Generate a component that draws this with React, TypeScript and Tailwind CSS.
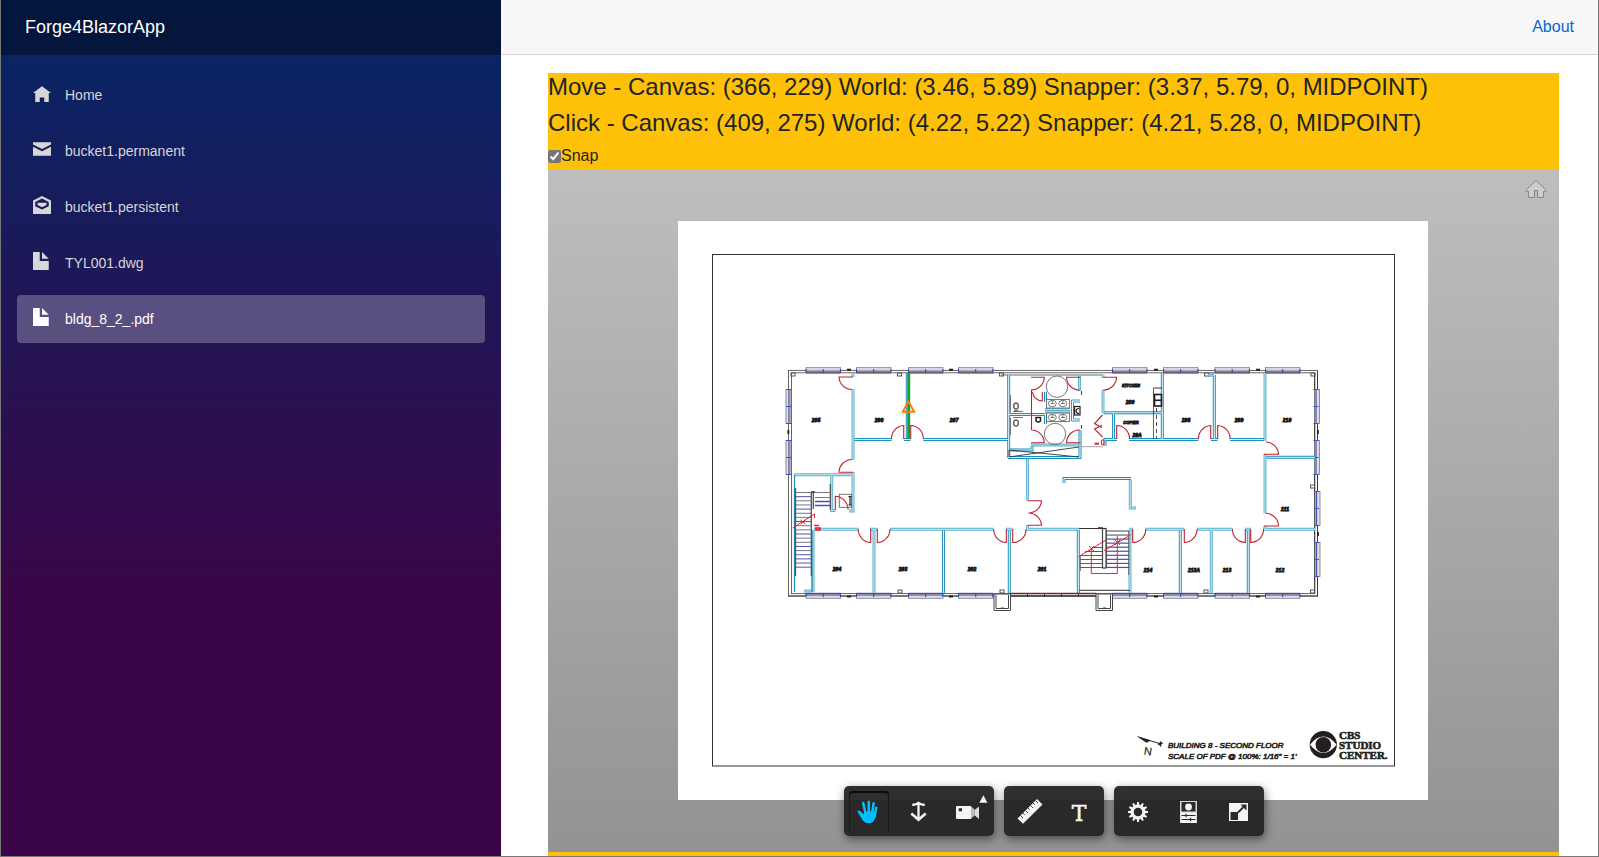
import type { ReactNode } from "react";

const OI_HOME = "M4 1l-4 3h1v4h2v-2h2v2h2v-4.03l1 .03-4-3z";
const OI_ENVELOPE_CLOSED = "M0 1v1l4 2 4-2v-1h-8zm0 2v4h8v-4l-4 2-4-2z";
const OI_ENVELOPE_OPEN =
  "M4 0l-4 2v6h8v-6l-4-2zm0 1.13l3 1.5v1.88l-3 1.5-3-1.5v-1.88l3-1.5zm-2 1.87v1l2 1 2-1v-1h-4z";
const OI_FILE = "M0 0v8h7v-4h-4v-4h-3zm4 0v3h3l-3-3z";

const navItems = [
  { label: "Home", icon: OI_HOME },
  { label: "bucket1.permanent", icon: OI_ENVELOPE_CLOSED },
  { label: "bucket1.persistent", icon: OI_ENVELOPE_OPEN },
  { label: "TYL001.dwg", icon: OI_FILE },
  { label: "bldg_8_2_.pdf", icon: OI_FILE, active: true },
];

function Sidebar() {
  return (
    <aside className="flex w-[500px] shrink-0 flex-col bg-[linear-gradient(180deg,#052767_0%,#3a0647_70%)]">
      <div className="flex h-[55px] shrink-0 items-center bg-black/40 px-6 pb-0.5">
        <a href="#" className="text-lg text-white">
          Forge4BlazorApp
        </a>
      </div>
      <nav className="flex flex-col gap-2 px-4 pt-4">
        {navItems.map((item) => (
          <a
            key={item.label}
            href="#"
            className={
              item.active
                ? "flex h-12 items-center rounded bg-white/25 px-4 text-sm text-white"
                : "flex h-12 items-center rounded px-4 text-sm text-[#d7d7d7]"
            }
          >
            <span className="block w-8 pb-1">
              <svg viewBox="0 0 8 8" className="size-[18px] fill-current" aria-hidden="true">
                <path fillRule="evenodd" d={item.icon} />
              </svg>
            </span>
            {item.label}
          </a>
        ))}
      </nav>
    </aside>
  );
}

const solidWalls = `
M853 439.5H891.5M904 439.5H910.5M923.3 439.5H1008M1008.7 375V458M1009 414.5H1045M1045.5 392V402M1045.5 414V424
M1032 446V450H1009M1008 457.5H1080V430M1103.5 412.7H1162M1113.5 413V439M1129 439.5H1198.5M1211 439.5H1217.5
M1105 446V439.5H1117M1162.3 373V439M1214.3 375V439M1230 439.5H1265M1265 457.3H1315M1208 375H1214
M943.5 530V593M1009.3 530V593M1078.3 530V593M1064 483V478.5H1131M1248.3 530V593M1180.3 530V593`;

const softWalls = `
M853 373V377M853 389V460M853 472V511H849M794 474.7H853M831.7 475V510.5H835.5M814 529.3H858.3M870 529.3H877.5
M890 529.3H993.7M1006 529.3H1012.5M1026 529.3H1079M813 530V592M804 591H813M874 530V593M1027.5 459V500.5M1027.5 525V529
M1130 530V593M1129 529.3H1133M1145.5 529.3H1184M1197 529.3H1232.5M1245.5 529.3H1251M1263 529.3H1315M1211.3 530V593
M1130.3 480V508H1136M1265 454V513.5M1265 526V529M1265 373V441M1103 390V413M1103 375V378M1079.5 376V391
M1031 445H1080M1045 409.5H1070M1045 411.8H1070`;

const doors = `
M853 377H839A13 13 0 0 0 852 389.5M903.7 439V425.5A13 13 0 0 0 891.5 439M910.7 439V425.5A13 13 0 0 1 923.3 439
M853 472.3H839A13 13 0 0 1 852 459.5M870.7 529V542.5A13 13 0 0 1 858.3 529M877.3 529V542.5A13 13 0 0 0 890 529
M1006.3 529V542.5A13 13 0 0 1 993.7 529M1012.7 529V542.5A13 13 0 0 0 1026 529
M1027.5 500.7H1041.5A13 13 0 0 1 1028.5 513M1027.5 525.3H1041.5A13 13 0 0 0 1028.5 513
M835.3 509.5V496.3A13 13 0 0 1 848 509.5M1132.7 529V542.5A13 13 0 0 0 1145.7 529
M1184.3 529V542.5A13 13 0 0 0 1197 529M1245.3 529V542.5A13 13 0 0 1 1232.5 529M1250.7 529V542.5A13 13 0 0 0 1263.5 529
M1264 526H1278.5A13 13 0 0 0 1266 513.3M1103 377.3H1116.5A13 13 0 0 1 1103 390M1116.7 439V425.5A13 13 0 0 1 1129.5 439
M1210.7 439V425.5A13 13 0 0 0 1198.5 439M1217.7 439V425.5A13 13 0 0 1 1230 439M1264 454.3H1278.5A13 13 0 0 0 1266 442
M1031 377.3H1044.3A13 13 0 0 1 1031.5 390V430M1042.3 392V401A10 10 0 0 1 1032.5 392M1031 442.7H1044.3A13 13 0 0 0 1031.5 430
M1080.5 377.3H1066.5A13 13 0 0 0 1080 390M1080.5 442.7H1066.5A13 13 0 0 1 1080 430
M1081.5 391V395M1081.5 425V429M1102.5 415L1094.5 423.5L1102 427.5M1102 425.5L1094.5 429L1102.5 437`;

const windowXs = [806, 856.5, 908.5, 958.5, 1112.5, 1163.5, 1215, 1265.5];
const sideWindows = [
  { x: 786, y: 389.5 },
  { x: 786, y: 440.5 },
  { x: 1314.5, y: 389.5 },
  { x: 1314.5, y: 440.5 },
  { x: 1315, y: 491.5 },
  { x: 1315, y: 542.5 },
];
const vents = [848.5, 950.5, 1155.5, 1257.5];
const columns = [
  [793, 374.5],
  [899.5, 374.5],
  [1001.5, 374.5],
  [1206.5, 374.5],
  [1313, 374.5],
  [900, 591.5],
  [1002, 591.5],
  [1206, 591.5],
  [1312.5, 591.5],
  [1312.5, 486.5],
];
const rooms: [string, number, number][] = [
  ["205", 816, 422],
  ["206", 879, 422],
  ["207", 954, 422],
  ["208", 1186, 422],
  ["209", 1239, 422],
  ["210", 1287, 422],
  ["211", 1285, 511],
  ["204", 837, 571],
  ["203", 903, 571],
  ["202", 972, 571],
  ["201", 1042, 571],
  ["214", 1148, 572],
  ["213A", 1194, 572],
  ["213", 1227, 572],
  ["212", 1280, 572],
  ["KITCHEN", 1131, 387],
  ["200", 1130, 404],
  ["COPIER", 1131, 424],
  ["20A", 1137, 437],
];
const leftTreads = Array.from({ length: 19 }, (_, i) => 492.5 + i * 4.15);
const centerTreads = Array.from({ length: 10 }, (_, i) => 531 + i * 4.05);

function FloorPlan() {
  return (
    <svg
      viewBox="548 221 1011 579"
      className="block size-full"
      role="img"
      aria-label="Building 8 second floor plan"
      fill="none"
      fontFamily="'Liberation Sans', Arial, sans-serif"
    >
      <rect x="678" y="221" width="750" height="579" fill="#fff" />
      <rect x="712.5" y="254.5" width="682" height="511.5" stroke="#333" />

      <g stroke="#555" strokeWidth="0.9">
        <rect x="788.5" y="370.4" width="529" height="225.6" />
        <rect x="791.5" y="372.8" width="523" height="220.8" />
        <path d="M1314.8 373V594M1317.5 371V596M788 596H1318" stroke="#333" />
        <path d="M1001 375H1103" stroke="#8ba3a6" strokeWidth="1.6" />
        <path d="M1080 446.7H1103" stroke="#999" />
      </g>

      {windowXs.map((x) => (
        <g key={x}>
          <rect x={x} y="367.5" width="34.5" height="5" fill="#d6d6dd" stroke="#8b8b9a" strokeWidth="0.8" />
          <path d={`M${x} 371.2h34.5`} stroke="#4153b4" />
          <path d={`M${x} 373h34.5`} stroke="#6b2a36" strokeWidth="0.9" />
          <path d={`M${x} 369v4m17.2-4v4m17.2-4v4`} stroke="#3343a8" />
          <rect x={x} y="593.8" width="34.5" height="4.8" fill="#d6d6dd" stroke="#8b8b9a" strokeWidth="0.8" />
          <path d={`M${x} 595h34.5`} stroke="#4153b4" />
          <path d={`M${x} 593.3h34.5`} stroke="#6b2a36" strokeWidth="0.9" />
          <path d={`M${x} 593v4m17.2-4v4m17.2-4v4`} stroke="#3343a8" />
        </g>
      ))}
      {sideWindows.map(({ x, y }) => (
        <g key={`${x}-${y}`}>
          <rect x={x} y={y} width="5" height="34" fill="#dcdce4" stroke="#777" strokeWidth="0.8" />
          <path
            d={
              x < 1000
                ? `M${x + 3} ${y}v34M${x} ${y}h6m-6 17h6m-6 17h6`
                : `M${x + 1.5} ${y}v34M${x - 1} ${y}h5m-5 17h5m-5 17h5`
            }
            stroke="#4153b4"
            strokeWidth="1.2"
          />
        </g>
      ))}
      {vents.map((x) => (
        <path key={x} d={`M${x - 1.5} 369.7h4M${x - 1.5} 596.4h4`} stroke="#222" strokeWidth="2" />
      ))}
      <path d="M788.3 430v4M1318 430v4M1318 532v4" stroke="#222" strokeWidth="1.8" />
      {columns.map(([x, y]) => (
        <rect key={`${x}-${y}`} x={x - 2} y={y - 1.5} width="4" height="3" stroke="#555" />
      ))}

      <path d={solidWalls} stroke="#1b8fbb" strokeWidth="3" />
      <path d={solidWalls} stroke="#e4f3f8" strokeWidth="1.1" />
      <path d={softWalls} stroke="#5fb3d0" strokeWidth="3" />
      <path d={softWalls} stroke="#b6dcea" strokeWidth="1.2" />
      <path d="M794.5 475V592M812 530V592" stroke="#1b8fbb" strokeWidth="1.2" />
      <path d="M1080 400H1071.5V421H1080M1080 402H1073.5V419H1080" stroke="#1b8fbb" strokeWidth="0.9" />
      <path d="M1009 450V457L1079 447M1009 450L1079 457" stroke="#333" strokeWidth="0.9" />

      <path d={doors} stroke="#c3202c" strokeWidth="1.1" />

      <g stroke="#666" strokeWidth="0.9">
        <circle cx="1057" cy="386.7" r="10.7" />
        <circle cx="1055" cy="434" r="10.7" />
        <rect x="1046.5" y="399.5" width="23" height="8.5" />
        <rect x="1046.5" y="413" width="23" height="8.5" />
        {[403.5, 417.5].map((y) => (
          <g key={y}>
            <ellipse cx="1052.3" cy={y} rx="4" ry="3.2" />
            <ellipse cx="1062.8" cy={y} rx="4" ry="3.2" />
            <path d={`M1050.5 ${y}h4M1061 ${y}h4M1052.3 ${y}v-3M1062.8 ${y}v-3`} />
          </g>
        ))}
        <path d="M1010.5 395V412M1010.5 418V435M1013 411.5H1023M1013 417.5H1023" />
        <ellipse cx="1016" cy="406" rx="2.3" ry="3" strokeWidth="1.5" />
        <ellipse cx="1016" cy="423" rx="2.3" ry="3" strokeWidth="1.5" />
        <path d="M1014 411h4.5" strokeWidth="1.6" />
        <rect x="839.3" y="494.3" width="12.3" height="13" />
      </g>
      <g stroke="#1d1d1d" strokeWidth="1.2">
        <path d="M848.5 496.5h3M850 496v9M848.5 505h3" />
        <rect x="1074.5" y="406.5" width="5.5" height="8.5" />
        <path d="M1079 408.500q-3 0-3 2.500t3 2.500" />
        <path d="M1036 417.5h4.5v3.5q-2.3 2-4.5 0z" strokeWidth="1.5" />
        <path d="M1153.5 388H1162" strokeWidth="0.9" />
        <path d="M1153.5 388V439" strokeWidth="0.7" />
        <path d="M1156.5 408V438" strokeWidth="0.8" strokeDasharray="4 3" />
        <rect x="1154.5" y="394.5" width="7" height="11.5" strokeWidth="1.6" />
        <path d="M1154.5 400.3h7" strokeWidth="1.6" />
      </g>

      {leftTreads.map((y, i) => (
        <path key={y} d={`M795.5 ${y}H811.5`} stroke={i % 3 === 1 || i > 14 ? "#4a58a8" : "#777788"} />
      ))}
      <path d="M795.5 488V576M811.3 492V576M830.3 484V510M813.3 492V509" stroke="#555" strokeWidth="1.3" />
      <path d="M811 492h4" stroke="#333" strokeWidth="1.5" />
      <path d="M815 492.5H830M815 497.5H830" stroke="#777788" />
      <path d="M815 501.5H830M815 505.5H830" stroke="#4153b4" strokeWidth="1.3" />
      <g stroke="#f0202c">
        <path d="M792.5 528L814.5 514V518M800.5 520l5 4m0-4l-5 4" />
        <path d="M814 525.5h5M816 528h4v2h-4z" strokeWidth="1.7" />
      </g>

      {centerTreads.map((y, i) => (
        <path key={y} d={`M1106.5 ${y}H1129.5`} stroke={i < 2 ? "#666" : "#4153b4"} strokeWidth="1.2" />
      ))}
      <path
        d="M1092 547.5H1102M1085 551.5H1102M1080 555.5H1102M1080 559.5H1102M1080 563.5H1102M1080 567.5H1102"
        stroke="#4a58a8"
        strokeWidth="1.2"
      />
      <path d="M1080.3 556V571M1128.7 531V575M1106.5 530V568" stroke="#666" />
      <rect x="1102.5" y="528.5" width="3.5" height="39.5" stroke="#444" strokeWidth="1.2" />
      <path d="M1079 528.5H1106M1079 590.3H1130" stroke="#333" />
      <path
        d="M1078.5 556.7L1106 540M1104 550.7L1130.5 535M1091.3 548V573.5H1117.3V536M1089 546l5 5m0-5l-5 5M1115 540l5 5m0-5l-5 5M1098 527.5h5"
        stroke="#f0202c"
      />

      <path d="M1010 593.5H1096" stroke="#6b2a36" strokeWidth="1.3" />
      <path d="M1010 596H1096M1027.5 594v3M1044.5 594v3M1061.5 594v3M1078.5 594v3" stroke="#333" />
      {[994, 1096].map((x) => (
        <g key={x} stroke="#444">
          <path d={`M${x} 594v16.5h16.5v-16.5z`} fill="#fff" />
          <path d={`M${x + 2} 595v13.5h12.5v-13.5M${x + 7} 608h3`} />
        </g>
      ))}
      <path d="M1101.5 440h2.5v4.5h-2.5z" stroke="#f0202c" />
      <path d="M1094.5 443.7h4.5" stroke="#f0202c" strokeWidth="2" />

      <path d="M906.3 373V439" stroke="#1b8fbb" />
      <path d="M908.7 373V439" stroke="#18a02c" strokeWidth="3" />
      <path d="M908.4 401.5L902.7 411.8H914.2Z" stroke="#ff7a0a" strokeWidth="1.9" />

      <g
        fill="#1d1d1d"
        stroke="#1d1d1d"
        strokeWidth="0.9"
        fontWeight="700"
        fontStyle="italic"
        textAnchor="middle"
      >
        {rooms.map(([label, x, y]) => (
          <text key={label} x={x} y={y} fontSize={label.length > 4 ? 4 : 5}>
            {label}
          </text>
        ))}
      </g>

      <g fill="#231f20" stroke="#231f20">
        <path d="M1140 737.5L1161 744" />
        <path d="M1137.5 736.5L1150 740.8L1146.5 742.5Z" strokeWidth="0.5" />
        <path d="M1160.5 741.5V746.5M1158 744.5l4.5-1.5" strokeWidth="1.5" />
        <text x="1144" y="755" fontSize="11" strokeWidth="0.2" transform="rotate(8 1148 751)">
          N
        </text>
        <g fontSize="8" fontStyle="italic" strokeWidth="0.6">
          <text x="1168" y="748">
            BUILDING 8 - SECOND FLOOR
          </text>
          <text x="1168" y="759">
            SCALE OF PDF @ 100%: 1/16" = 1'
          </text>
        </g>
      </g>
      <circle cx="1323.3" cy="744.7" r="13.6" fill="#231f20" />
      <path d="M1310 744.7Q1323.3 728.5 1336.6 744.7Q1323.3 761 1310 744.7Z" fill="#fff" />
      <circle cx="1323.3" cy="744.7" r="7.8" fill="#231f20" />
      <g
        fill="#231f20"
        stroke="#231f20"
        strokeWidth="0.6"
        fontFamily="'Liberation Serif', 'Times New Roman', serif"
        fontWeight="700"
        fontSize="11"
      >
        <text x="1339" y="738.5">
          CBS
        </text>
        <text x="1339" y="748.5">
          STUDIO
        </text>
        <text x="1339" y="758.5">
          CENTER.
        </text>
      </g>
    </svg>
  );
}

function ToolButton({ label, active, children }: { label: string; active?: boolean; children: ReactNode }) {
  return (
    <button
      type="button"
      aria-label={label}
      className={
        active
          ? "size-10 rounded-t-sm text-[#00bfff] shadow-[inset_0_2px_1px_#0a0a0a,inset_1px_0_0_#1c1c1c,inset_-1px_0_0_#1c1c1c]"
          : "size-10 text-[#f4f4f4]"
      }
    >
      {children}
    </button>
  );
}

function ToolIcon({ children }: { children: ReactNode }) {
  return (
    <svg viewBox="0 0 40 40" className="block size-10" fill="none" aria-hidden="true">
      {children}
    </svg>
  );
}

function ToolGroup({ children }: { children: ReactNode }) {
  return (
    <div className="flex gap-[10px] rounded-[5px] bg-[#222222]/94 p-[5px] shadow-[1px_3px_10px_rgba(0,0,0,0.5)]">
      {children}
    </div>
  );
}

const gearTeeth = Array.from({ length: 12 }, (_, i) => i * 30);

function Toolbar() {
  return (
    <div className="absolute inset-x-0 bottom-4 flex justify-center gap-[10px]">
      <ToolGroup>
        <ToolButton label="Pan" active>
          <ToolIcon>
            <g stroke="currentColor" strokeWidth="2.5" strokeLinecap="round">
              <path d="M14.2 12L16.6 23M19.8 10.8V22M24.6 12.2L23 23M27.2 16.8L25.6 26" />
            </g>
            <path
              d="M8.3 20.2Q9.5 19 11.3 20.3L15.3 23.5V20.5H26.6Q27.2 25 25.6 28.5Q24 32.3 20 32.3Q16 32.3 13.8 29.5Z"
              fill="currentColor"
            />
          </ToolIcon>
        </ToolButton>
        <ToolButton label="Zoom">
          <ToolIcon>
            <g stroke="currentColor" strokeWidth="2.3">
              <path d="M19.5 12V29" />
              <path d="M13.3 14Q17.5 13.3 19.5 11.8Q21.5 13.3 25.7 14" />
              <path d="M12.3 22.5L19.5 28.7L26.7 22.5" strokeWidth="2.7" />
            </g>
          </ToolIcon>
        </ToolButton>
        <ToolButton label="Camera interactions">
          <ToolIcon>
            <path
              fillRule="evenodd"
              d="M8 15H21.5Q22.7 15 22.7 16.5V26.5Q22.7 28 21.5 28H8Q7 28 7 27V16Q7 15 8 15ZM9.7 17.3V20.3H13V17.3Z"
              fill="currentColor"
            />
            <path d="M22.7 16L25.5 18.5V24.7L22.7 27Z" fill="#bdbdbd" />
            <path d="M25.5 19L30 15.5V28L25.5 24.3Z" fill="#dcdcdc" />
            <path d="M34.4 4.3L38.4 11.7H30.3Z" fill="currentColor" />
          </ToolIcon>
        </ToolButton>
      </ToolGroup>
      <ToolGroup>
        <ToolButton label="Measure">
          <ToolIcon>
            <path d="M8.5 27.5L28 8L33.5 13.5L14 32.7Z" fill="currentColor" />
            <path
              d="M11.5 24.5l2.5 2.5M14 22l1.7 1.7M16.5 19.5l2.5 2.5M19 17l1.7 1.7M21.5 14.5l2.5 2.5M24 12l1.7 1.7M26.5 9.5l2.5 2.5"
              stroke="#2b2b2b"
              strokeWidth="0.9"
            />
          </ToolIcon>
        </ToolButton>
        <ToolButton label="Text">
          <ToolIcon>
            <text
              x="20"
              y="30"
              fontSize="22"
              textAnchor="middle"
              fill="currentColor"
              stroke="currentColor"
              strokeWidth="0.5"
              fontFamily="'DejaVu Serif', serif"
            >
              T
            </text>
          </ToolIcon>
        </ToolButton>
      </ToolGroup>
      <ToolGroup>
        <ToolButton label="Settings">
          <ToolIcon>
            <circle cx="19" cy="21" r="5.9" stroke="currentColor" strokeWidth="3.2" />
            {gearTeeth.map((angle) => (
              <path
                key={angle}
                d="M17.7 14.5L18.1 11H19.9L20.3 14.5Z"
                fill="currentColor"
                transform={`rotate(${angle} 19 21)`}
              />
            ))}
          </ToolIcon>
        </ToolButton>
        <ToolButton label="Properties">
          <ToolIcon>
            <rect x="11" y="10" width="17" height="22" fill="#d8d8d8" />
            <rect x="12.5" y="11" width="14" height="9.5" fill="#2b2b2b" />
            <circle cx="19.5" cy="16" r="3.4" fill="currentColor" />
            <rect x="12" y="21.5" width="15" height="10.5" fill="currentColor" />
            <path
              d="M12.5 24.5H26.5M12.5 28.5H26.5M17 22.8V26.2M21.5 26.8V30.2"
              stroke="#2b2b2b"
              strokeWidth="1.2"
            />
          </ToolIcon>
        </ToolButton>
        <ToolButton label="Full screen">
          <ToolIcon>
            <rect x="10" y="12" width="19" height="18" fill="currentColor" />
            <rect x="11.5" y="21" width="7.5" height="8" fill="#2b2b2b" />
            <path d="M19 21.5L25.5 15" stroke="#2b2b2b" strokeWidth="1.8" />
            <path d="M21.5 13.5H27.5V19.5Z" fill="#2b2b2b" />
          </ToolIcon>
        </ToolButton>
      </ToolGroup>
    </div>
  );
}

function Viewer() {
  return (
    <section className="relative min-h-0 flex-1 bg-[linear-gradient(180deg,#bebebe,#939393)] py-[52px]">
      <FloorPlan />
      <button type="button" aria-label="Home view" className="absolute top-[10px] right-3 size-[22px]">
        <svg viewBox="0 0 22 22" className="block size-full" aria-hidden="true">
          <path
            d="M11 1.5L1.5 10.5V12.5H3.5V18.5H9.5V11.5H12.5V18.5H18.5V12.5H20.5V10.5Z"
            fill="#cccccc"
            stroke="#858585"
            strokeLinejoin="round"
          />
        </svg>
      </button>
      <Toolbar />
    </section>
  );
}

export default function App() {
  return (
    <div className="flex h-screen border-x border-b border-[#777] bg-white font-['Liberation_Sans',Arial,sans-serif] text-base text-[#212529]">
      <Sidebar />
      <main className="flex min-w-0 flex-1 flex-col">
        <header className="flex h-[55px] shrink-0 items-center justify-end border-b border-[#d6d5d5] bg-[#f7f7f7] px-6">
          <a href="#" className="text-[#0366d6]">
            About
          </a>
        </header>
        <div className="flex min-h-0 flex-1 flex-col pt-[18px] pr-[39px] pl-[47px]">
          <div className="flex min-h-0 flex-1 flex-col bg-[#ffc107] pb-1">
            <h4 className="mb-2 text-2xl leading-7">
              Move - Canvas: (366, 229) World: (3.46, 5.89) Snapper: (3.37, 5.79, 0, MIDPOINT)
            </h4>
            <h4 className="mb-2 text-2xl leading-7">
              Click - Canvas: (409, 275) World: (4.22, 5.22) Snapper: (4.21, 5.28, 0, MIDPOINT)
            </h4>
            <label className="flex h-6 items-center pb-0.5">
              <input type="checkbox" defaultChecked className="size-[13px] accent-[#767676]" />
              Snap
            </label>
            <Viewer />
          </div>
        </div>
      </main>
    </div>
  );
}
